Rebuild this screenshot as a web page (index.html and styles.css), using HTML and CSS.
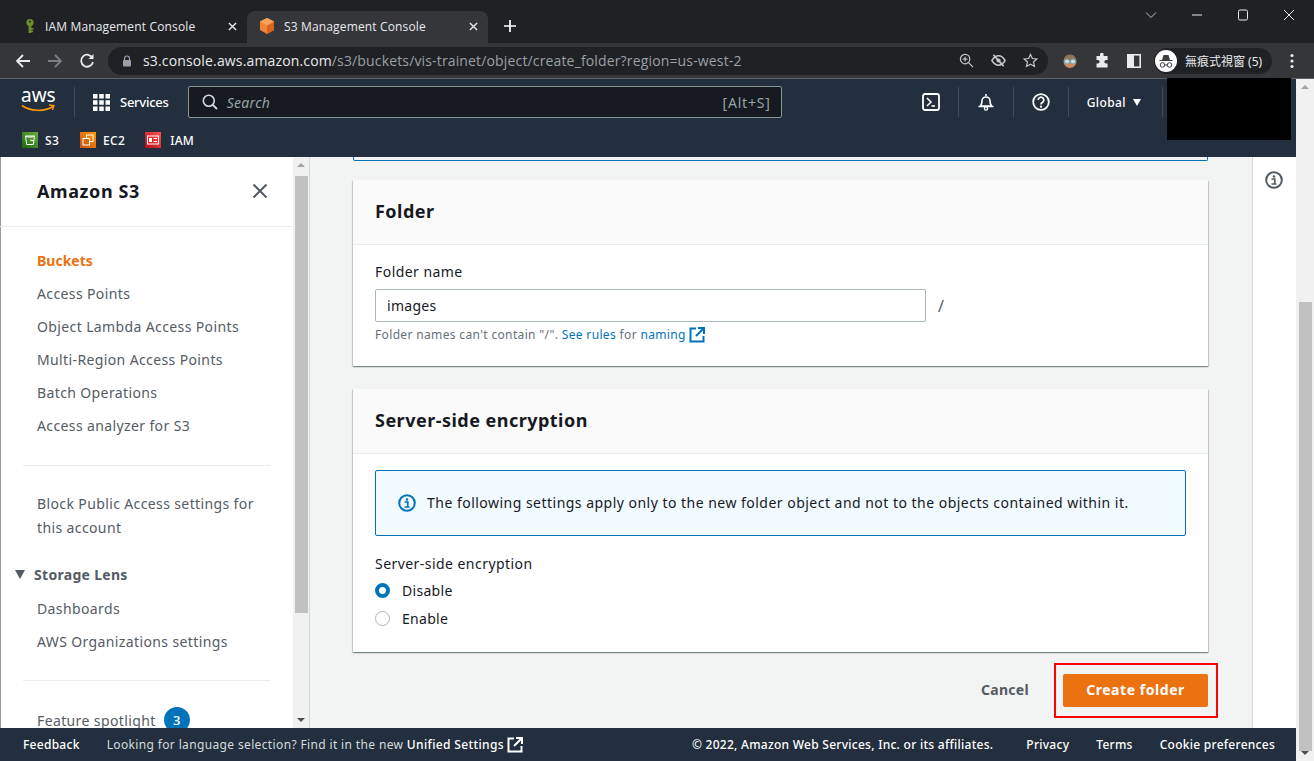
FILE: index.html
```html
<!DOCTYPE html>
<html>
<head>
<meta charset="utf-8">
<title>S3 Management Console</title>
<link rel="stylesheet" href="styles.css">
</head>
<body>
<div class="tabstrip">
  <div class="tab">
    <svg class="favicon" viewBox="0 0 16 16"><circle cx="8" cy="4.500" r="3.600" fill="#6f8f2f"/><rect x="6.600" y="6" width="2.800" height="9" fill="#6f8f2f"/><rect x="9" y="10" width="2.500" height="1.600" fill="#6f8f2f"/><rect x="9" y="12.600" width="2" height="1.600" fill="#6f8f2f"/><circle cx="8" cy="3.400" r="1" fill="#202124"/></svg>
    <span class="tabtitle">IAM Management Console</span>
    <svg class="tabclose" viewBox="0 0 10 10"><path d="M1 1l8 8M9 1L1 9" stroke="#e8eaed" stroke-width="1.500"/></svg>
  </div>
  <div class="tab tab-on">
    <svg class="favicon" viewBox="0 0 16 16"><path d="M8 0l7 3.600v8.400l-7 4-7-4V3.600z" fill="#f58534"/><path d="M8 7.500L15 3.600v8.400l-7 4z" fill="#d9661f"/><path d="M8 0l7 3.600-7 3.900-7-3.900z" fill="#f9a15c"/></svg>
    <span class="tabtitle">S3 Management Console</span>
    <svg class="tabclose" viewBox="0 0 10 10"><path d="M1 1l8 8M9 1L1 9" stroke="#e8eaed" stroke-width="1.500"/></svg>
  </div>
  <svg class="newtab" viewBox="0 0 12 12"><path d="M6 0v12M0 6h12" stroke="#fff" stroke-width="1.700"/></svg>
  <div class="winctl">
    <svg viewBox="0 0 12 12" class="winchev"><path d="M1 3.500l5 5 5-5" fill="none" stroke="#bdc1c6"/></svg>
    <svg viewBox="0 0 12 12"><path d="M1 6h10" stroke="#e8eaed"/></svg>
    <svg viewBox="0 0 12 12"><rect x="1.500" y="1" width="9" height="10" rx="1.500" fill="none" stroke="#e8eaed"/></svg>
    <svg viewBox="0 0 12 12"><path d="M1 1l10 10M11 1L1 11" stroke="#e8eaed"/></svg>
  </div>
</div>

<div class="toolbar">
  <svg class="tool" viewBox="0 0 16 16"><path d="M15 8H2M8 2L2 8l6 6" fill="none" stroke="#e8eaed" stroke-width="1.800"/></svg>
  <svg class="tool" viewBox="0 0 16 16"><path d="M1 8h13M8 2l6 6-6 6" fill="none" stroke="#7b7e82" stroke-width="1.800"/></svg>
  <svg class="tool" viewBox="0 0 16 16"><path d="M13.500 5A6 6 0 1 0 14 9" fill="none" stroke="#e8eaed" stroke-width="1.800"/><path d="M14.500 1v5h-5z" fill="#e8eaed"/></svg>
  <div class="omnibox">
    <svg class="lock" viewBox="0 0 10 12"><path d="M2.500 5V3.500a2.500 2.500 0 0 1 5 0V5" fill="none" stroke="#9aa0a6" stroke-width="1.200"/><rect x="1" y="5" width="8" height="6.500" rx="1" fill="#9aa0a6"/></svg>
    <span class="url"><b>s3.console.aws.amazon.com</b>/s3/buckets/vis-trainet/object/create_folder?region=us-west-2</span>
    <div class="omni-icons">
      <svg viewBox="0 0 16 16"><circle cx="6.500" cy="6.500" r="5" fill="none" stroke="#c4c7ca" stroke-width="1.300"/><path d="M10.200 10.200L15 15M6.500 4v5M4 6.500h5" stroke="#c4c7ca" stroke-width="1.300"/></svg>
      <svg viewBox="0 0 16 16"><path d="M1 8s3-5 7-5 7 5 7 5-3 5-7 5-7-5-7-5z" fill="none" stroke="#c4c7ca" stroke-width="1.600"/><circle cx="8" cy="8" r="2.200" fill="#c4c7ca"/><path d="M2.500 2l11 12" stroke="#c4c7ca" stroke-width="1.800"/></svg>
      <svg viewBox="0 0 16 16"><path d="M8 1.500l2 4.400 4.700.5-3.500 3.200 1 4.700L8 11.900l-4.200 2.400 1-4.700L1.300 6.400 6 5.900z" fill="none" stroke="#c4c7ca" stroke-width="1.300"/></svg>
    </div>
  </div>
  <svg class="ext ext-face" viewBox="0 0 16 16"><circle cx="8" cy="8.500" r="6.500" fill="#d08a5e"/><path d="M2 7a6 5.500 0 0 1 12 0z" fill="#8d7658"/><circle cx="5" cy="8.500" r="2.500" fill="#bfe0ea" stroke="#7f9aa3"/><circle cx="11" cy="8.500" r="2.500" fill="#bfe0ea" stroke="#7f9aa3"/></svg>
  <svg class="ext ext-puzzle" viewBox="0 0 16 16"><path d="M6 1.500a1.800 1.800 0 0 1 3.600 0V3h4v4h-1.500a1.800 1.800 0 0 0 0 3.600H13.600v4H2.500v-4h1.300a1.800 1.800 0 0 0 0-3.600H2.500V3H6z" fill="#e8eaed"/></svg>
  <svg class="ext ext-side" viewBox="0 0 14 14"><rect x="0.800" y="0.800" width="12.400" height="12.400" fill="none" stroke="#e8eaed" stroke-width="1.600"/><rect x="1" y="1" width="6" height="12" fill="#e8eaed"/></svg>
  <div class="profile">
    <svg class="avatar" viewBox="0 0 22 22"><circle cx="11" cy="11" r="11" fill="#fff"/><path d="M7 10l1.500-5h5L15 10h2.500v1h-13v-1z" fill="#3c4043"/><circle cx="7.500" cy="15" r="2.300" fill="none" stroke="#3c4043"/><circle cx="14.500" cy="15" r="2.300" fill="none" stroke="#3c4043"/><path d="M9.800 15h2.400" stroke="#3c4043"/></svg>
    <span class="profname">無痕式視窗 (5)</span>
  </div>
  <svg class="menu" viewBox="0 0 4 16"><circle cx="2" cy="2.500" r="1.600" fill="#e8eaed"/><circle cx="2" cy="8" r="1.600" fill="#e8eaed"/><circle cx="2" cy="13.500" r="1.600" fill="#e8eaed"/></svg>
</div>

<div class="viewport">
  <div class="page">
    <header class="awsnav">
      <div class="navrow">
        <div class="logo">
          <span class="logotext">aws</span>
          <svg viewBox="0 0 34 8"><path d="M1 1.500c8 6 22 6.500 31 1" fill="none" stroke="#f90" stroke-width="1.600"/><path d="M28 1l5 .5-1.500 4.500" fill="none" stroke="#f90" stroke-width="1.300"/></svg>
        </div>
        <span class="vsep sep-logo"></span>
        <svg class="grid" viewBox="0 0 17 17"><path d="M0 0h4.500v4.500H0zM6.250 0h4.500v4.500h-4.500zM12.500 0H17v4.500h-4.500zM0 6.250h4.500v4.500H0zM6.250 6.250h4.500v4.500h-4.500zM12.500 6.250H17v4.500h-4.500zM0 12.500h4.500V17H0zM6.250 12.500h4.500V17h-4.500zM12.500 12.500H17V17h-4.500z" fill="#fff"/></svg>
        <span class="services">Services</span>
        <div class="searchbox">
          <svg viewBox="0 0 16 16"><circle cx="6.800" cy="6.800" r="5.500" fill="none" stroke="#d5dbdb" stroke-width="1.600"/><path d="M10.800 10.800L15 15" stroke="#d5dbdb" stroke-width="1.800"/></svg>
          <span class="searchtext">Search</span>
          <span class="shortcut">[Alt+S]</span>
        </div>
        <svg class="navicon nav-term" viewBox="0 0 18 18"><rect x="1" y="1" width="16" height="16" rx="2" fill="none" stroke="#fff" stroke-width="1.800"/><path d="M5 5l4 4-4 4" fill="none" stroke="#fff" stroke-width="1.600"/><path d="M9.500 13H13" stroke="#fff" stroke-width="1.600"/></svg>
        <span class="vsep"></span>
        <svg class="navicon" viewBox="0 0 18 18"><path d="M3.500 13c1.500-2 1.500-3 1.500-5a4 4 0 0 1 8 0c0 2 0 3 1.500 5z M1.500 13.500h15" fill="none" stroke="#fff" stroke-width="1.600"/><path d="M9 1v2" stroke="#fff" stroke-width="1.600"/><circle cx="9" cy="15.500" r="1.600" fill="none" stroke="#fff" stroke-width="1.300"/></svg>
        <span class="vsep"></span>
        <svg class="navicon" viewBox="0 0 18 18"><circle cx="9" cy="9" r="7.800" fill="none" stroke="#fff" stroke-width="1.800"/><path d="M6.200 7a2.800 2.800 0 1 1 4.400 2.300C9.500 10 9 10.500 9 11.500" fill="none" stroke="#fff" stroke-width="1.700"/><circle cx="9" cy="13.700" r="1.100" fill="#fff"/></svg>
        <span class="vsep"></span>
        <span class="region">Global</span>
        <span class="regionarrow"></span>
        <span class="vsep sep-last"></span>
      </div>
      <div class="favrow">
        <svg class="favsvc" viewBox="0 0 16 16"><defs><linearGradient id="gs3" x1="0" y1="1" x2="1" y2="0"><stop offset="0" stop-color="#1b660f"/><stop offset="1" stop-color="#6cae3e"/></linearGradient></defs><rect width="16" height="16" fill="url(#gs3)"/><path d="M3.500 4h9l-1.200 8.500h-6.600zM3.500 4c1.500 1.500 7.500 1.500 9 0M8 8l4 1" fill="none" stroke="#fff"/></svg>
        <span class="favname">S3</span>
        <svg class="favsvc fav-ec2" viewBox="0 0 16 16"><defs><linearGradient id="gec2" x1="0" y1="1" x2="1" y2="0"><stop offset="0" stop-color="#c8511b"/><stop offset="1" stop-color="#f90"/></linearGradient></defs><rect width="16" height="16" fill="url(#gec2)"/><rect x="6.500" y="3" width="6.500" height="6.500" fill="none" stroke="#fff"/><rect x="3" y="6.500" width="6.500" height="6.500" fill="#d86613" stroke="#fff"/></svg>
        <span class="favname">EC2</span>
        <svg class="favsvc fav-iam" viewBox="0 0 16 16"><defs><linearGradient id="giam" x1="0" y1="1" x2="1" y2="0"><stop offset="0" stop-color="#bd0816"/><stop offset="1" stop-color="#ff5252"/></linearGradient></defs><rect width="16" height="16" fill="url(#giam)"/><rect x="2.500" y="4" width="11" height="8" fill="none" stroke="#fff"/><rect x="4" y="6" width="3" height="4" fill="#fff"/><path d="M8.500 6.500h3.500M8.500 9.500h3.500" stroke="#fff"/></svg>
        <span class="favname">IAM</span>
      </div>
    </header>

    <div class="content">
      <aside class="sidenav">
        <div class="sidescroll">
          <div class="sidehead">
            <h2>Amazon S3</h2>
            <svg viewBox="0 0 16 16"><path d="M1.500 1.500l13 13M14.500 1.500l-13 13" stroke="#545b64" stroke-width="2"/></svg>
          </div>
          <ul class="links links-first">
            <li class="active">Buckets</li>
            <li>Access Points</li>
            <li>Object Lambda Access Points</li>
            <li>Multi-Region Access Points</li>
            <li>Batch Operations</li>
            <li>Access analyzer for S3</li>
          </ul>
          <hr class="sidesep">
          <p class="blocklink">Block Public Access settings for this account</p>
          <div class="lens"><span class="lensarrow"></span>Storage Lens</div>
          <ul class="links links-lens">
            <li>Dashboards</li>
            <li>AWS Organizations settings</li>
          </ul>
          <hr class="sidesep sep2">
          <div class="spotlight">Feature spotlight <span class="badge">3</span></div>
        </div>
        <div class="sidebar-track">
          <span class="arrow-up"></span>
          <div class="sidebar-thumb"></div>
          <span class="arrow-down"></span>
        </div>
      </aside>

      <main class="main">
        <div class="prevcard"></div>
        <section class="card card-folder">
          <div class="cardhead"><h3>Folder</h3></div>
          <div class="cardbody">
            <label class="fieldlabel">Folder name</label>
            <div class="inputrow">
              <div class="textinput">images</div>
              <span class="slash">/</span>
            </div>
            <p class="hint">Folder names can't contain "/". <a>See rules</a> for <a>naming</a>
              <svg class="extlink" viewBox="0 0 16 16"><path d="M7 1.500H1.500v13h13V9" fill="none" stroke="#0073bb" stroke-width="2"/><path d="M9 1h6v6M15 1L7 9" fill="none" stroke="#0073bb" stroke-width="2"/></svg>
            </p>
          </div>
        </section>
        <section class="card card-enc">
          <div class="cardhead"><h3>Server-side encryption</h3></div>
          <div class="cardbody body-enc">
            <div class="alert">
              <svg viewBox="0 0 18 18"><circle cx="9" cy="9" r="7.800" fill="none" stroke="#0073bb" stroke-width="2"/><circle cx="9" cy="5.500" r="1.300" fill="#0073bb"/><path d="M6.500 8h3.300v4.500M6.500 13h5" fill="none" stroke="#0073bb" stroke-width="1.700"/></svg>
              <span class="alerttext">The following settings apply only to the new folder object and not to the objects contained within it.</span>
            </div>
            <label class="fieldlabel enc-label">Server-side encryption</label>
            <div class="radio radio-first"><span class="dot dot-on"></span>Disable</div>
            <div class="radio"><span class="dot"></span>Enable</div>
          </div>
        </section>
        <div class="actions">
          <span class="cancel">Cancel</span>
          <div class="highlight"><span class="primary">Create folder</span></div>
        </div>
      </main>

      <aside class="toolspanel">
        <svg viewBox="0 0 18 18"><circle cx="9" cy="9" r="7.800" fill="none" stroke="#545b64" stroke-width="2"/><circle cx="9" cy="5.500" r="1.300" fill="#545b64"/><path d="M6.500 8h3.300v4.500M6.500 13h5" fill="none" stroke="#545b64" stroke-width="1.700"/></svg>
      </aside>
    </div>

    <footer class="footer">
      <span class="feedback">Feedback</span>
      <span class="lang">Looking for language selection? Find it in the new <b>Unified Settings</b></span>
      <svg class="footext" viewBox="0 0 16 16"><path d="M7 1.500H1.500v13h13V9" fill="none" stroke="#fff" stroke-width="2"/><path d="M9 1h6v6M15 1L7 9" fill="none" stroke="#fff" stroke-width="2"/></svg>
      <span class="copy">© 2022, Amazon Web Services, Inc. or its affiliates.</span>
      <span class="flink flink-first">Privacy</span>
      <span class="flink">Terms</span>
      <span class="flink">Cookie preferences</span>
    </footer>
  </div>

  <div class="pagebar">
    <span class="arrow-up"></span>
    <div class="pagebar-thumb"></div>
    <span class="arrow-down"></span>
  </div>
  <div class="redacted"></div>
</div>
</body>
</html>
```

FILE: styles.css
```css
html, body { margin: 0; padding: 0; height: 761px; overflow: hidden; }
body {
	font-family: "Noto Sans", "Noto Sans CJK TC", sans-serif;
	background: #202124;
	color: #16191f;
	display: flex;
	flex-direction: column;
}
h2, h3, p, ul { margin: 0; padding: 0; }
svg { display: block; flex: none; }

/* browser tabs */
.tabstrip { height: 32px; padding-top: 11px; background: #202124; display: flex; align-items: flex-start; padding-left: 8px; flex: none; border-top: 1px solid #3a3b3e; margin-top: -1px; }
.tab { width: 239px; height: 32px; display: flex; align-items: center; color: #e8eaed; font-size: 12px; padding-left: 14px; padding-bottom: 2px; box-sizing: border-box; }
.tab-on { background: #35363a; border-radius: 8px 8px 0 0; width: 241px; padding-left: 12px; }
.favicon { width: 16px; height: 16px; margin-right: 7px; }
.tab-on .favicon { margin-right: 9px; }
.tabtitle { flex: 1; white-space: nowrap; font-family: "Open Sans", sans-serif; letter-spacing: .15px; }
.tabclose { width: 9px; height: 9px; margin-right: 10px; }
.newtab { width: 12px; height: 12px; margin: 9px 0 0 16px; }
.winctl { margin-left: auto; display: flex; margin-top: -2px; margin-right: 19px; gap: 34px; }
.winctl svg { width: 12px; height: 12px; }

/* browser toolbar */
.toolbar { height: 36px; background: #35363a; flex: none; display: flex; align-items: center; padding-left: 15px; box-sizing: border-box; border-bottom: 1px solid #5f6368; }
.tool { width: 16px; height: 16px; margin-right: 16px; }
.omnibox { width: 940px; margin-left: -3px; height: 28px; background: #202124; border-radius: 14px; display: flex; align-items: center; box-sizing: border-box; padding-left: 14px; }
.lock { width: 10px; height: 12px; margin-right: 11px; }
.url { font-size: 14px; color: #9aa0a6; font-family: "Open Sans", sans-serif; white-space: nowrap; letter-spacing: .15px; }
.url b { font-weight: 400; color: #e8eaed; }
.omni-icons { margin-left: auto; display: flex; gap: 17px; padding-right: 10px; }
.omni-icons svg { width: 15px; height: 15px; }
.ext { width: 16px; height: 16px; }
.ext-face { margin-left: 14px; }
.ext-puzzle { margin-left: 16px; }
.ext-side { margin-left: 17px; width: 14px; height: 14px; }
.profile { margin-left: 13px; height: 26px; width: 118px; background: #202124; border-radius: 13px; display: flex; align-items: center; padding-left: 1px; box-sizing: border-box; }
.avatar { width: 22px; height: 22px; margin-right: 8px; }
.profname { font-size: 12px; color: #e8eaed; white-space: nowrap; }
.menu { width: 4px; height: 16px; margin-left: 18px; }

/* everything below the browser chrome */
.viewport { flex: 1; display: flex; position: relative; min-height: 0; background: #f2f3f3; }
.page { flex: 1; display: flex; flex-direction: column; min-width: 0; }

.awsnav { height: 78px; background: #232f3e; flex: none; color: #fff; font-size: 13px; }
.navrow { height: 46px; display: flex; align-items: center; padding-left: 21px; }
.logo { width: 34px; height: 24px; position: relative; }
.logotext { display: block; font-size: 19px; line-height: 18px; margin-top: -4px; color: #fff; }
.logo svg { width: 34px; height: 8px; margin-top: 0; }
.vsep { width: 1px; height: 30px; background: #414d5c; flex: none; margin: 0 18px; }
.sep-logo { margin: 0 18px 0 19px; }
.grid { width: 17px; height: 17px; }
.services { margin-left: 10px; font-weight: 500; letter-spacing: -.25px; }
.searchbox { width: 594px; height: 32px; margin-left: 19px; box-sizing: border-box; background: #16191f; border: 1px solid #879596; border-radius: 2px; display: flex; align-items: center; padding: 0 10px 0 13px; }
.searchbox svg { width: 16px; height: 16px; margin-right: 9px; }
.searchtext { font-style: italic; font-size: 14px; color: #95a5a6; flex: 1; letter-spacing: .3px; }
.shortcut { font-size: 14px; color: #95a5a6; letter-spacing: .8px; }
.navicon { width: 18px; height: 18px; }
.nav-term { margin-left: 140px; }
.region { font-size: 12px; font-weight: 500; letter-spacing: .4px; }
.regionarrow { margin-left: 7px; border-left: 4.500px solid transparent; border-right: 4.500px solid transparent; border-top: 7px solid #fff; }
.sep-last { margin-left: 21px; }
.favrow { height: 32px; display: flex; align-items: center; padding-left: 22px; padding-bottom: 2px; box-sizing: border-box; }
.favsvc { width: 16px; height: 16px; margin-right: 7px; }
.favname { font-size: 12px; font-weight: 500; letter-spacing: .3px; }
.fav-ec2 { margin-left: 21px; }
.fav-iam { margin-left: 20px; margin-right: 9px; }

.content { flex: 1; display: flex; min-height: 0; overflow: hidden; }

/* left navigation */
.sidenav { width: 310px; flex: none; display: flex; background: #fff; border-right: 1px solid #d5dbdb; box-sizing: border-box; box-shadow: inset 1px 0 0 #9a9a9a; }
.sidescroll { width: 293px; flex: none; overflow: hidden; font-size: 14px; color: #545b64; letter-spacing: .38px; }
.sidehead { height: 69px; display: flex; align-items: center; justify-content: space-between; padding: 0 25px 2px 37px; box-sizing: content-box; height: 67px; border-bottom: 1px solid #eaeded; }
.sidehead h2 { font-size: 18px; font-weight: 700; color: #16191f; letter-spacing: .6px; }
.sidehead svg { width: 16px; height: 16px; }
.links { list-style: none; padding-left: 37px; }
.links li { height: 33px; line-height: 33px; white-space: nowrap; }
.links-first { padding-top: 17px; }
.links-lens { padding-top: 6px; }
.links .active { color: #ec7211; font-weight: 700; letter-spacing: 0; }
.sidesep { border: 0; border-top: 1px solid #eaeded; margin: 23px 23px 0; }
.sep2 { margin-top: 22px; }
.blocklink { padding: 26px 30px 0 37px; line-height: 24px; }
.lens { margin-top: 22px; padding-left: 15px; font-weight: 700; display: flex; align-items: center; height: 24px; letter-spacing: .3px; }
.lensarrow { width: 0; height: 0; border-left: 5.500px solid transparent; border-right: 5.500px solid transparent; border-top: 9px solid #545b64; margin-right: 9px; }
.spotlight { padding: 26px 0 0 37px; display: flex; align-items: center; gap: 8px; }
.badge { width: 26px; height: 26px; border-radius: 50%; background: #0073bb; color: #fff; text-align: center; line-height: 26px; font-size: 13px; font-weight: 500; letter-spacing: 0; }
.sidebar-track { width: 16px; background: #f1f1f1; display: flex; flex-direction: column; align-items: center; }
.sidebar-thumb { width: 13px; height: 437px; margin-top: 9px; background: #c1c1c1; }
.arrow-up { margin-top: 6px; border-left: 4px solid transparent; border-right: 4px solid transparent; border-bottom: 4px solid #a3a3a3; }
.arrow-down { margin-top: auto; margin-bottom: 6px; border-left: 4px solid transparent; border-right: 4px solid transparent; border-top: 4px solid #505050; }

/* main column */
.main { flex: 1; min-width: 0; padding: 0 44px 0 43px; }
.prevcard { height: 4px; border: 1px solid #0073bb; border-top: 0; border-radius: 0 0 2px 2px; box-sizing: border-box; }
.card { background: #fff; box-shadow: 0 1px 1px 0 rgba(0,28,36,.3), 1px 1px 1px 0 rgba(0,28,36,.15), -1px 1px 1px 0 rgba(0,28,36,.15); }
.card-folder { margin-top: 19px; height: 186px; }
.card-enc { margin-top: 23px; height: 263px; }
.cardhead { background: #fafafa; border-bottom: 1px solid #eaeded; display: flex; align-items: center; padding: 0 0 2px 22px; box-sizing: border-box; height: 65px; }
.cardhead h3 { font-size: 18px; font-weight: 700; color: #16191f; letter-spacing: .48px; }
.cardbody { padding: 17px 22px 0; }
.fieldlabel { display: block; font-size: 14px; line-height: 20px; color: #16191f; letter-spacing: .45px; }
.inputrow { display: flex; align-items: center; margin-top: 7px; }
.textinput { width: 551px; height: 33px; box-sizing: border-box; border: 1px solid #aab7b8; border-radius: 2px; padding-left: 11px; line-height: 31px; font-size: 14px; letter-spacing: .3px; }
.slash { margin-left: 12px; font-size: 16px; color: #545b64; }
.hint { font-size: 12px; color: #687078; margin-top: 3px; line-height: 20px; display: flex; align-items: center; white-space: pre; letter-spacing: .35px; }
.hint a { color: #0073bb; }
.extlink { width: 16px; height: 16px; margin-left: 3px; }
.body-enc { padding-top: 16px; }
.alert { height: 66px; box-sizing: border-box; background: #f1faff; border: 1px solid #0073bb; border-radius: 2px; display: flex; align-items: center; padding: 0 0 2px 22px; font-size: 14px; letter-spacing: .48px; }
.alert svg { width: 18px; height: 18px; margin: 2px 11px 0 0; }
.enc-label { margin-top: 18px; }
.radio { display: flex; align-items: center; font-size: 14px; height: 28px; color: #16191f; letter-spacing: .3px; }
.radio-first { margin-top: 2px; }
.dot { width: 15px; height: 15px; border-radius: 50%; box-sizing: border-box; border: 1px solid #aab7b8; margin-right: 12px; }
.dot-on { border: 4.500px solid #0073bb; }
.actions { display: flex; align-items: center; justify-content: flex-end; margin-top: 22px; }
.cancel { font-size: 14px; font-weight: 700; color: #545b64; margin: -2px 34px 0 0; letter-spacing: .3px; }
.highlight { border: 2px solid #f00; padding: 9px 8px 9px 7px; margin: -11px -10px -11px -9px; }
.primary { display: block; width: 145px; height: 33px; line-height: 32px; text-align: center; background: #ec7211; color: #fff; font-size: 14px; font-weight: 700; border-radius: 2px; letter-spacing: .55px; }

.toolspanel { width: 44px; flex: none; background: #fff; border-left: 1px solid #d5dbdb; box-sizing: border-box; padding: 14px 0 0 12px; }
.toolspanel svg { width: 18px; height: 18px; }

/* footer */
.footer { height: 33px; flex: none; background: #232f3e; display: flex; align-items: center; color: #fff; font-size: 12px; font-weight: 500; padding-left: 23px; white-space: nowrap; letter-spacing: .27px; }
.lang { margin-left: 27px; color: #d5dbdb; font-weight: 400; letter-spacing: .36px; }
.lang b { color: #fff; font-weight: 500; }
.footext { width: 16px; height: 16px; margin-left: 3px; }
.copy { margin-left: auto; }
.flink { margin-left: 27px; }
.flink-first { margin-left: 33px; }
.footer .flink:last-child { margin-right: 21px; }

/* page scrollbar */
.pagebar { width: 18px; flex: none; background: #f1f1f1; display: flex; flex-direction: column; align-items: center; }
.pagebar-thumb { width: 13px; height: 450px; margin-top: 213px; background: #c1c1c1; }

.redacted { position: absolute; left: 1167px; top: -1px; width: 124px; height: 62px; background: #000; }
```
